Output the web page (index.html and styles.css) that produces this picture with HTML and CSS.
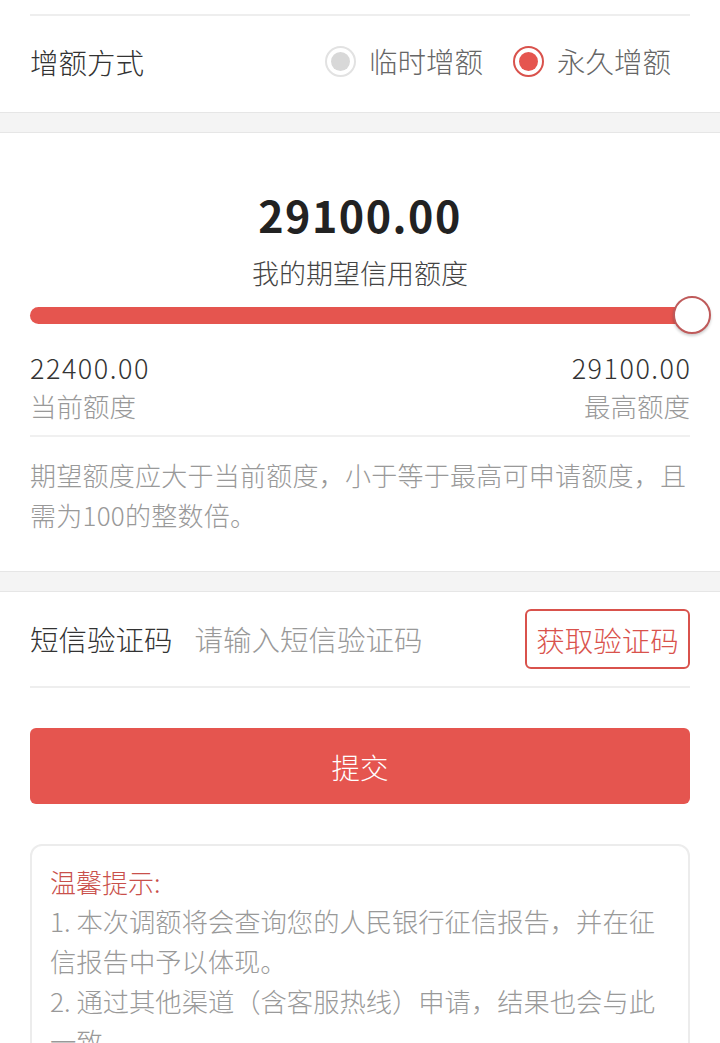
FILE: index.html
```html
<!DOCTYPE html>
<html lang="zh-CN">
<head>
<meta charset="utf-8">
<title>调额</title>
<link rel="stylesheet" href="styles.css">
</head>
<body>
<div class="section">
  <div class="prev-row"></div>
  <div class="row mode-row">
    <div class="label">增额方式</div>
    <div class="radios">
      <div class="radio"><span class="dot dot-off"></span><span class="radio-text">临时增额</span></div>
      <div class="radio"><span class="dot dot-on"></span><span class="radio-text">永久增额</span></div>
    </div>
  </div>
</div>
<div class="gap"></div>
<div class="section amount">
  <div class="big">29100.00</div>
  <div class="sub">我的期望信用额度</div>
  <div class="slider">
    <div class="track"></div>
    <div class="thumb"></div>
  </div>
  <div class="range">
    <div class="range-item">
      <div class="num">22400.00</div>
      <div class="cap">当前额度</div>
    </div>
    <div class="range-item right">
      <div class="num">29100.00</div>
      <div class="cap">最高额度</div>
    </div>
  </div>
  <p class="note">期望额度应大于当前额度，小于等于最高可申请额度，且需为100的整数倍。</p>
</div>
<div class="gap"></div>
<div class="section">
  <div class="row sms-row">
    <div class="label">短信验证码</div>
    <div class="placeholder">请输入短信验证码</div>
    <div class="code-btn">获取验证码</div>
  </div>
  <div class="submit">提交</div>
  <div class="tips">
    <div class="tips-title">温馨提示:</div>
    <div class="tips-line">1. 本次调额将会查询您的人民银行征信报告，并在征信报告中予以体现。</div>
    <div class="tips-line">2. 通过其他渠道（含客服热线）申请，结果也会与此一致。</div>
  </div>
</div>
</body>
</html>
```
FILE: styles.css
```css
* { box-sizing: border-box; }
body {
  margin: 0;
  background: #fff;
  font-family: "Noto Sans CJK SC", "Noto Sans", sans-serif;
  color: #333;
  font-weight: 300;
}
.section {
  background: #fff;
  padding: 0 30px;
}
.prev-row {
  height: 16px;
  border-bottom: 2px solid #eeeeee;
}
.row {
  display: flex;
  align-items: center;
}
.mode-row {
  height: 96px;
  justify-content: space-between;
}
.label {
  font-size: 28.5px;
  line-height: 40px;
  color: #333;
  margin-top: -4px;
}
.radios {
  display: flex;
  align-items: center;
  gap: 30px;
  padding-right: 19px;
  margin-top: -6px;
}
.radio {
  display: flex;
  align-items: center;
  gap: 13px;
}
.radio-text {
  font-size: 28.5px;
  line-height: 40px;
  color: #666;
}
.dot {
  width: 31px;
  height: 31px;
  border-radius: 50%;
  display: inline-flex;
  align-items: center;
  justify-content: center;
}
.dot::after {
  content: "";
  width: 19px;
  height: 19px;
  border-radius: 50%;
}
.dot-off { border: 2px solid #e2e2e2; }
.dot-off::after { background: #d8d8d8; }
.dot-on { border: 2px solid #d9524c; }
.dot-on::after { background: #e5554f; }
.gap {
  height: 21px;
  background: #f4f4f4;
  border-top: 1px solid #e6e6e6;
  border-bottom: 1px solid #e6e6e6;
}
.amount {
  padding-top: 53px;
  padding-bottom: 36px;
}
.big {
  text-align: center;
  font-size: 43px;
  line-height: 56px;
  letter-spacing: 1.5px;
  font-weight: 700;
  color: #222;
}
.sub {
  text-align: center;
  font-size: 27px;
  line-height: 36px;
  margin-top: 13px;
  color: #444;
}
.slider {
  position: relative;
  margin-top: 4px;
  height: 40px;
  display: flex;
  align-items: center;
}
.track {
  flex: 1;
  height: 17px;
  border-radius: 9px;
  background: #e5554f;
}
.thumb {
  position: absolute;
  right: -21px;
  top: 1px;
  width: 38px;
  height: 38px;
  border-radius: 50%;
  background: #fff;
  border: 2px solid #bf5a5a;
  box-shadow: 0 2px 3px rgba(0,0,0,0.2);
}
.range {
  display: flex;
  justify-content: space-between;
  padding: 14px 0 10px;
  border-bottom: 2px solid #f0f0f0;
}
.range-item.right { text-align: right; }
.num {
  font-size: 27px;
  line-height: 38px;
  letter-spacing: 1.5px;
  color: #333;
}
.range-item.right .num { margin-right: -1.5px; }
.cap {
  font-size: 26.5px;
  line-height: 38px;
  color: #999;
}
.note {
  margin: 18px 0 0;
  font-size: 26px;
  line-height: 40px;
  letter-spacing: 0.25px;
  color: #999;
}
.sms-row {
  height: 96px;
  border-bottom: 2px solid #eeeeee;
}
.sms-row .placeholder {
  flex: 1;
  margin-left: 22px;
  font-size: 28.5px;
  line-height: 40px;
  color: #999;
}
.sms-row .label { margin-top: 0; }
.code-btn {
  width: 165px;
  height: 60px;
  border: 2px solid #d9524c;
  border-radius: 6px;
  color: #d9524c;
  font-size: 28.5px;
  display: flex;
  align-items: center;
  justify-content: center;
}
.submit {
  margin-top: 40px;
  height: 76px;
  border-radius: 6px;
  background: #e5554f;
  color: #fff;
  font-size: 28.5px;
  display: flex;
  align-items: center;
  justify-content: center;
}
.tips {
  margin-top: 40px;
  border: 2px solid #ececec;
  border-radius: 12px;
  padding: 17px 18px 20px;
}
.tips-title {
  color: #c9504b;
  font-size: 26px;
  line-height: 38px;
}
.tips-line {
  font-size: 26.3px;
  line-height: 40px;
  color: #999;
}
```
